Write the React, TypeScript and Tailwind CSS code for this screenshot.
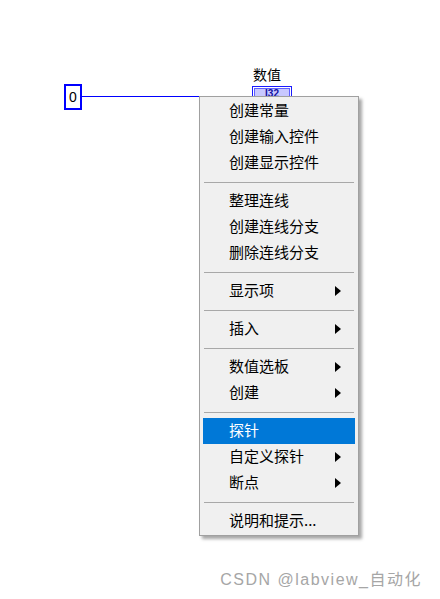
import React from "react";

type Item = { label: string; arrow?: boolean; active?: boolean } | "sep";

const items: Item[] = [
  { label: "创建常量" },
  { label: "创建输入控件" },
  { label: "创建显示控件" },
  "sep",
  { label: "整理连线" },
  { label: "创建连线分支" },
  { label: "删除连线分支" },
  "sep",
  { label: "显示项", arrow: true },
  "sep",
  { label: "插入", arrow: true },
  "sep",
  { label: "数值选板", arrow: true },
  { label: "创建", arrow: true },
  "sep",
  { label: "探针", active: true },
  { label: "自定义探针", arrow: true },
  { label: "断点", arrow: true },
  "sep",
  { label: "说明和提示..." },
];

function Arrow({ white }: { white?: boolean }) {
  return (
    <svg width="6" height="10" viewBox="0 0 6 10" className="shrink-0">
      <path d="M0 0 L6 5 L0 10 Z" fill={white ? "#fff" : "#000"} />
    </svg>
  );
}

export default function App() {
  return (
    <div
      className="relative w-[440px] h-[599px] bg-white overflow-hidden"
      style={{ fontFamily: '"Noto Sans CJK SC", "Noto Sans", sans-serif' }}
    >
      {/* constant node */}
      <div className="absolute left-[64px] top-[84px] w-[18px] h-[26px] border-2 border-[#0000ff] bg-white flex items-center justify-center">
        <span className="text-[14px] leading-none text-black" style={{ fontFamily: '"Liberation Sans", sans-serif' }}>
          0
        </span>
      </div>
      {/* wire */}
      <div className="absolute left-[82px] top-[96px] w-[140px] h-[1px] bg-[#0000ff]" />

      {/* indicator label */}
      <div className="absolute left-[253px] top-[64px] text-[14px] leading-[20px] text-black">数值</div>
      {/* indicator */}
      <div className="absolute left-[252px] top-[86px] w-[40px] h-[20px] border border-[#1a1aff] bg-white p-[1px]">
        <div className="w-full h-full bg-[#c8c8ff] border border-[#6060ff] flex items-start justify-center">
          <span className="text-[10px] leading-[10px] font-bold text-[#1010a0]" style={{ fontFamily: '"Liberation Sans", sans-serif' }}>
            I32
          </span>
        </div>
      </div>

      {/* context menu */}
      <div className="absolute left-[199px] top-[96px] w-[160px] border border-[#a0a0a0] bg-[#f0f0f0] py-[1px] shadow-[3px_3px_3px_rgba(0,0,0,0.35)] flex flex-col">
        {items.map((it, i) =>
          it === "sep" ? (
            <div key={i} className="h-[12px] flex items-center px-[4px]">
              <div className="w-full h-[1px] bg-[#a8a8a8]" />
            </div>
          ) : (
            <div
              key={i}
              className={
                "h-[26px] mx-[3px] pl-[26px] pr-[14px] flex items-center justify-between text-[15px] " +
                (it.active ? "bg-[#0078d7] text-white" : "text-black")
              }
            >
              <span className="leading-none pb-[3px]">{it.label}</span>
              {it.arrow && <Arrow white={it.active} />}
            </div>
          )
        )}
      </div>

      {/* watermark */}
      <div
        className="absolute right-[18px] top-[570px] text-[16px] leading-[20px] tracking-[1.5px] text-[#a6a6a6]"
        style={{ fontFamily: '"Liberation Sans", "Noto Sans CJK SC", sans-serif' }}
      >
        CSDN @labview_自动化
      </div>
    </div>
  );
}
